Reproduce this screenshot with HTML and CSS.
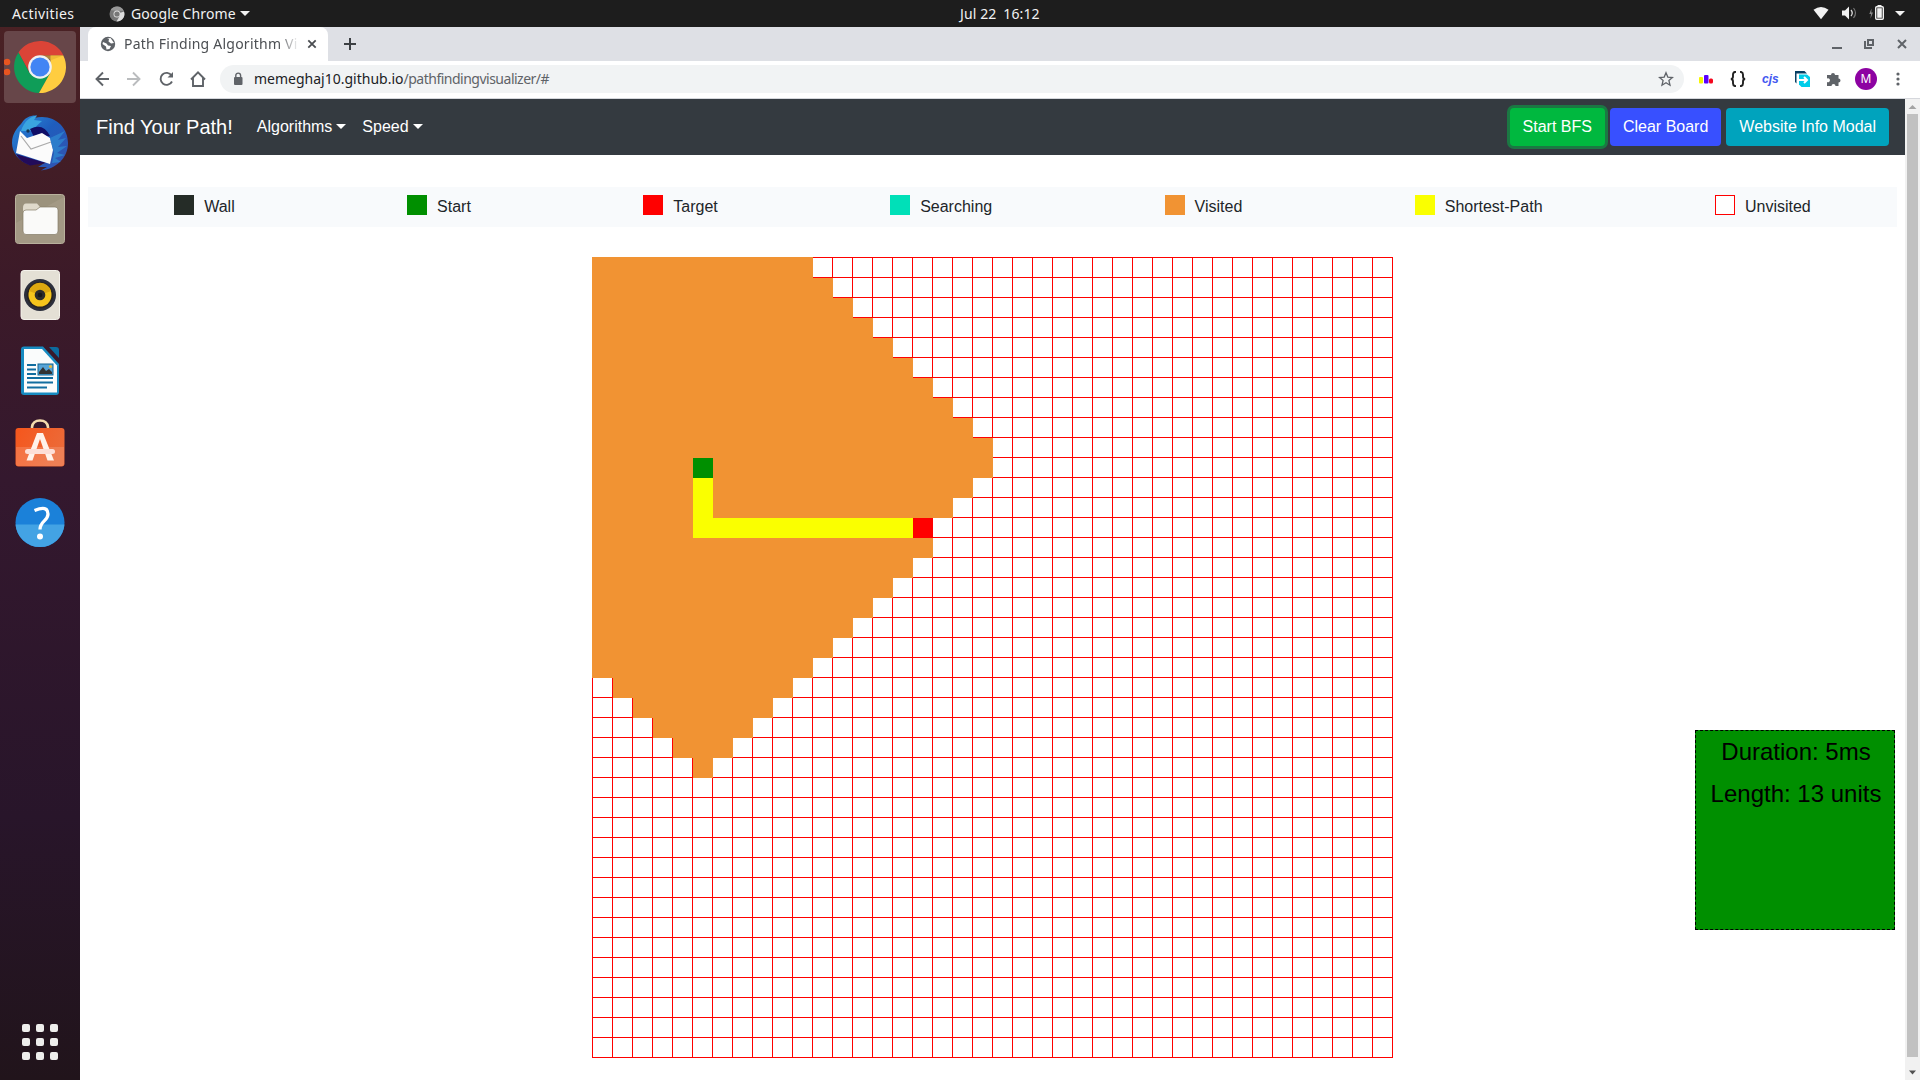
FILE: index.html
```html
<!DOCTYPE html>
<html lang="en">
<head>
<meta charset="utf-8">
<title>Path Finding Algorithm Visualizer</title>
<link rel="stylesheet" href="styles.css">
</head>
<body>
<header class="topbar">
  <div class="topbar-left">
    <span class="t-act">Activities</span>
    <svg class="t-chrome" width="16" height="16" viewBox="0 0 16 16"><circle cx="8" cy="8" r="7.500" fill="#777"/><path d="M8 8L15 5.500A7.500 7.500 0 0 1 7.500 15.500L11 9.500Z" fill="#ddd"/><path d="M1.500 4.200A7.500 7.500 0 0 1 14.800 4.800H8Z" fill="#999"/><circle cx="8" cy="8" r="3.500" fill="#ddd"/><circle cx="8" cy="8" r="2.600" fill="#777"/></svg>
    <span class="t-app">Google Chrome</span>
    <i class="caret"></i>
  </div>
  <div class="t-date"><span>Jul 22</span><span>16:12</span></div>
  <svg class="t-status" width="100" height="27" viewBox="0 0 100 27"><path d="M3.500 9.800Q11 4.400 18.500 9.800L11 19.200Z" fill="#f2f2f2"/><path d="M32 10.500H35L39 6.500V19.500L35 15.500H32Z" fill="#f2f2f2"/><path d="M41 10Q43.500 13 41 16" fill="none" stroke="#ddd" stroke-width="1.300"/><path d="M43.500 8Q47.500 13 43.500 18" fill="none" stroke="#777" stroke-width="1.200"/><path d="M61.500 8.500L59.300 14H61L60.500 18.500L63 12.500H61.300Z" fill="#888"/><rect x="65.700" y="6.700" width="7.600" height="12.600" rx="1" fill="none" stroke="#f2f2f2" stroke-width="1.400"/><rect x="67.200" y="8.200" width="4.600" height="9.600" fill="#f2f2f2"/><rect x="67.500" y="5" width="4" height="1.500" fill="#f2f2f2"/><path d="M85 11H95L90 16Z" fill="#f2f2f2"/></svg>
</header>
<div class="desktop">
  <nav class="dock">
    <div class="slot active"><svg width="72" height="72" viewBox="0 0 72 72"><circle cx="3" cy="31" r="3.300" fill="#e95420"/><circle cx="3" cy="41" r="3.300" fill="#e95420"/><path d="M14.500 21.500A26 26 0 0 1 59.500 24.500H36L25.800 42Z" fill="#db4437"/><path d="M14.500 21.500A26 26 0 0 0 35 62L46.500 42H25.500Z" fill="#0f9d58"/><path d="M59.300 24.500A26 26 0 0 1 35 62L46.200 42L46.500 24.500H36Z" fill="#ffcd40"/><path d="M36 24.500H59.300L47.500 29Z" fill="#e3b02e" opacity=".6"/><circle cx="36" cy="36" r="11.800" fill="#f1f1f1"/><circle cx="36" cy="36" r="9.600" fill="#4285f4"/></svg></div>
    <div class="slot"><svg width="72" height="72" viewBox="0 0 72 72"><defs><linearGradient id="tb" x1="0" y1="0" x2="1" y2="1"><stop offset="0" stop-color="#2b8edb"/><stop offset=".45" stop-color="#1f5dbd"/><stop offset="1" stop-color="#3552ae"/></linearGradient></defs><path d="M8 36C8 26 14 20 17 17C21 10 27 8 33 8.500L30 11C49 6 64 19 64 36C64 51 52 62 37 63.500L43 60L34 60L42 55L26 58C14 54 8 45 8 36Z" fill="url(#tb)"/><path d="M12 47L42 56L26 58.500Q16 55 12 47Z" fill="#220b5a"/><path d="M17 24C20 14 27 9 33 8.500L30 13L38 14L27 24Z" fill="#3aa5df"/><path d="M26 22Q39 15 46 29L30 30Z" fill="#100e67"/><path d="M16 24L23 31L38 26L46 31L49 43L46 57L12 46L14 35Z" fill="#fbfbfb"/><path d="M17 29L27 42L47 35" fill="none" stroke="#aaa" stroke-width="1.200"/><path d="M46 31L61 24L54 33L62 31L54 40L63 39L53 46L61 48L51 51L57 55L48 56L50 46Z" fill="#2e86cf" opacity=".8"/><circle cx="24" cy="24" r="1.700" fill="#163553"/></svg></div>
    <div class="slot"><svg width="72" height="72" viewBox="0 0 72 72"><rect x="11.500" y="11.500" width="49" height="49" rx="3" fill="#9b927d" stroke="#b9b19d"/><path d="M12 60V40L60 14V60Z" fill="#a89f8b" opacity=".6"/><path d="M19 25Q19 20.500 22 20.500H33L36 24H50Q53 24 53 27V35H19Z" fill="#e0dacb"/><path d="M19 30Q19 27 22 27H32L36 24H51Q54 24 54 27V48Q54 51.500 51 51.500H22Q19 51.500 19 48Z" fill="#fafaf9" stroke="#847b67" stroke-width=".7"/></svg></div>
    <div class="slot"><svg width="72" height="72" viewBox="0 0 72 72"><rect x="17" y="11.500" width="38.500" height="49" rx="3" fill="#e4e0d5" stroke="#f5f3ec"/><circle cx="36" cy="36" r="16" fill="#2c2f3c"/><circle cx="36" cy="36" r="13.200" fill="#292522"/><circle cx="36" cy="36" r="11.500" fill="#f5c51c"/><path d="M36 36L25 32A11.500 11.500 0 0 1 47 32Z" fill="#dda810"/><circle cx="36" cy="36" r="5.300" fill="#2b2b2c"/><circle cx="36" cy="36" r="2.300" fill="#171819"/></svg></div>
    <div class="slot"><svg width="72" height="72" viewBox="0 0 72 72"><path d="M20 11.500H39L55 29V57Q55 60 52 60H20Q17 60 17 57V14.500Q17 11.500 20 11.500Z" fill="#168bc1"/><path d="M45 12H52Q55 12 55 15V23Z" fill="#0c6b9e"/><path d="M20 14H38L53 30.500V57.500H20Z" fill="#fafcfc"/><path d="M23 30H32M23 34.500H32M23 39H32M23 43H49M23 47.500H49M23 52.500H43" stroke="#116d9f" stroke-width="2"/><rect x="34" y="29" width="15" height="11" fill="#56a4d7" stroke="#136491"/><path d="M35 39V37L39 32L42 36L45 34L48 37V39Z" fill="#323332"/><circle cx="46.500" cy="31.500" r="1.600" fill="#e4b93c"/></svg></div>
    <div class="slot"><svg width="72" height="72" viewBox="0 0 72 72"><defs><linearGradient id="bag" x1="0" y1="0" x2="1" y2=".4"><stop offset="0" stop-color="#f5561c"/><stop offset="1" stop-color="#ec6a38"/></linearGradient></defs><path d="M28 18V16Q29 9.500 36 9.500Q43 9.500 44 16V18" fill="none" stroke="#f4dcae" stroke-width="2.600"/><rect x="11.500" y="17" width="49" height="38.500" rx="3" fill="url(#bag)"/><path d="M12 36H60V53Q60 55 57.500 55H14Q12 55 12 53Z" fill="#fff" opacity=".15"/><path d="M33 22H39L50 49.500H43.500L36 28L28.500 49.500H22.500Z" fill="#fff2ea"/><rect x="21" y="38" width="30" height="5" rx="2.500" fill="#fddfd7"/></svg></div>
    <div class="slot"><svg width="72" height="72" viewBox="0 0 72 72"><circle cx="36" cy="35.600" r="24.500" fill="#1b81d9"/><path d="M11.500 37.500H60.500A24.500 24.500 0 0 1 36 60.100A24.500 24.500 0 0 1 11.500 37.500Z" fill="#43a3e4"/><path d="M30.500 23.500Q44 18 44 27C44 34 36 34 36 42.500" fill="none" stroke="#fff" stroke-width="3.300"/><circle cx="36" cy="49.500" r="3" fill="#fff"/></svg></div>
    <div class="apps"><i></i><i></i><i></i><i></i><i></i><i></i><i></i><i></i><i></i></div>
  </nav>
  <div class="browser">
    <div class="tabs">
      <div class="tab">
        <svg width="16" height="16" viewBox="0 0 16 16"><circle cx="8" cy="8" r="7.200" fill="#5f6368"/><path d="M3 6L6.500 7.500L8 9.500L11 10L9.500 13L6.500 13.500L6 10.500L2.500 8Z" fill="#fff"/><path d="M7 2.500L9 3L8.500 5.500L11 7.500L14 7L12 4L10.500 2Z" fill="#fff"/></svg>
        <span class="tab-title">Path Finding Algorithm Vi</span>
        <svg class="tab-x" width="10" height="10" viewBox="0 0 10 10"><path d="M1.300 1.300L8.700 8.700M8.700 1.300L1.300 8.700" stroke="#4a4d51" stroke-width="1.800"/></svg>
      </div>
      <svg class="plus" width="14" height="14" viewBox="0 0 14 14"><path d="M7 1V13M1 7H13" stroke="#3c4043" stroke-width="2"/></svg>
      <svg class="winctl" width="80" height="16" viewBox="0 0 80 16"><path d="M1 12H11" stroke="#5f6368" stroke-width="2"/><rect x="37" y="4" width="5" height="5" fill="none" stroke="#5f6368" stroke-width="2"/><path d="M34 5V12H41" fill="none" stroke="#5f6368" stroke-width="2"/><path d="M67 4L75 12M75 4L67 12" stroke="#5f6368" stroke-width="2"/></svg>
    </div>
    <div class="toolbar">
      <svg class="navicons" width="130" height="28" viewBox="0 0 130 28"><g fill="none" stroke-width="1.900"><path d="M19 14H6.500M13 7.500L6.500 14L13 20.500" stroke="#5f6368"/><path d="M37 14H49.500M43 7.500L49.500 14L43 20.500" stroke="#babcbe"/><path d="M81.600 10.500A6 6 0 1 0 82 16.500" stroke="#5f6368"/><path d="M83 7V12.500H77.500Z" fill="#5f6368" stroke="none"/><path d="M101 14.500L108 7.300L115 14.500M103 13V21H113V13" stroke="#5f6368"/></g></svg>
      <div class="omnibox">
        <svg width="10" height="14" viewBox="0 0 10 14"><rect x="1" y="5" width="8.500" height="8" rx="1" fill="#5f6368"/><path d="M2.800 5V3.500A2.300 2.300 0 0 1 7.600 3.500V5" fill="none" stroke="#5f6368" stroke-width="1.400"/></svg>
        <span class="host">memeghaj10.github.io</span><span class="path">/pathfindingvisualizer/#</span>
        <svg class="star" width="16" height="16" viewBox="0 0 16 16"><path d="M8 1.800L9.800 6.100L14.400 6.500L10.900 9.500L12 14.200L8 11.700L4 14.200L5.100 9.500L1.600 6.500L6.200 6.100Z" fill="none" stroke="#5f6368" stroke-width="1.300"/></svg>
      </div>
      <div class="exts">
        <svg width="16" height="16" viewBox="0 0 16 16"><rect x="1" y="6" width="4" height="6.500" rx="1" fill="#f6f600"/><rect x="6" y="4" width="4.500" height="8.500" rx="1" fill="#5a00ff"/><rect x="11" y="7.500" width="4" height="5" rx="1.500" fill="#f4061d"/></svg>
        <svg width="16" height="16" viewBox="0 0 16 16"><path d="M6 .8Q3 .8 3 3.500V5.500Q3 8 .8 8Q3 8 3 10.500V12.500Q3 15.200 6 15.200M10 .8Q13 .8 13 3.500V5.500Q13 8 15.200 8Q13 8 13 10.500V12.500Q13 15.200 10 15.200" fill="none" stroke="#222" stroke-width="1.900"/></svg>
        <span class="cjs">cjs</span>
        <svg width="16" height="16" viewBox="0 0 16 16"><path d="M1 0H10.500L13 2.500H2.500V12.500L1 11Z" fill="#073e63"/><path d="M5 3.500H13L16 6V16H7.500L5 13.500Z" fill="#00cdea"/><path d="M5 9H13M10 6L13 9L10 12" fill="none" stroke="#fff" stroke-width="2"/></svg>
        <svg width="16" height="16" viewBox="0 0 16 16"><path d="M1 4H5A2 2 0 1 1 9 4H12.500V7.500A2 2 0 1 1 12.500 11.500V15H9.500A1.900 1.900 0 1 0 5.500 15H1V11A2 2 0 1 0 1 7.500Z" fill="#5f6368"/></svg>
        <span class="avatar">M</span>
        <svg class="dots" width="4" height="14" viewBox="0 0 4 14"><circle cx="2" cy="2" r="1.600" fill="#5f6368"/><circle cx="2" cy="7" r="1.600" fill="#5f6368"/><circle cx="2" cy="12" r="1.600" fill="#5f6368"/></svg>
      </div>
    </div>
    <div class="viewport">
      <div class="page">
        <nav class="navbar">
          <span class="brand">Find Your Path!</span>
          <span class="navlink">Algorithms<i class="caret sm"></i></span>
          <span class="navlink">Speed<i class="caret sm"></i></span>
          <div class="buttons">
            <button class="btn green">Start BFS</button>
            <button class="btn blue">Clear Board</button>
            <button class="btn teal">Website Info Modal</button>
          </div>
        </nav>
        <ul class="legend">
          <li><i class="wall"></i>Wall</li>
          <li><i class="start"></i>Start</li>
          <li><i class="target"></i>Target</li>
          <li><i class="searching"></i>Searching</li>
          <li><i class="visited"></i>Visited</li>
          <li><i class="path-cell"></i>Shortest-Path</li>
          <li><i class="unvisited"></i>Unvisited</li>
        </ul>
        <div class="board" id="board"></div>
      </div>
      <div class="scrollbar">
        <svg width="15" height="15" viewBox="0 0 15 15"><path d="M3.500 10L7.500 6L11.500 10Z" fill="#a3a3a3"/></svg>
        <div class="thumb"></div>
        <svg width="15" height="15" viewBox="0 0 15 15"><path d="M4 5.500H11L7.500 9.500Z" fill="#505050"/></svg>
      </div>
    </div>
  </div>
</div>
<div class="result"><p>Duration: 5ms</p><p>Length: 13 units</p></div>
<script src="board.js"></script>
</body>
</html>
```
FILE: styles.css
```css
* { box-sizing: border-box; }
body { margin: 0; width: 1920px; height: 1080px; overflow: hidden; display: flex; flex-direction: column; background: #fff; font-family: "Liberation Sans", Arial, sans-serif; font-size: 16px; line-height: 24px; color: #212529; }
svg { display: block; flex: none; }
.topbar { height: 27px; flex: none; background: #1d1d1d; color: #f2f2f2; display: grid; grid-template-columns: 1fr auto 1fr; align-items: center; font: 14px/25px "Noto Sans", sans-serif; }
.topbar-left { display: flex; align-items: center; padding-left: 12px; }
.t-act { width: 97px; letter-spacing: .4px; }
.t-chrome { margin-right: 6px; }
.t-app { letter-spacing: .1px; width: 104px; white-space: nowrap; }
.topbar-left .caret { margin-left: 5px; }
.caret { display: inline-block; border: 5px solid transparent; border-top-color: currentColor; border-bottom: 0; }
.t-date { display: flex; gap: 7px; padding-left: 82px; width: 164px; letter-spacing: .1px; white-space: nowrap; }
.t-status { justify-self: end; margin-right: 10px; }
.desktop { flex: 1; display: flex; min-height: 0; }
.dock { width: 80px; flex: none; padding: 4px 4px 20px; display: flex; flex-direction: column; gap: 4px; background: linear-gradient(#4a2124, #3c1a28 24%, #34182e 43%, #28152a 75%, #21141b); }
.slot { height: 72px; border-radius: 4px; }
.slot.active { background: #674649; }
.apps { margin: auto auto 0; display: grid; grid-template-columns: repeat(3, 8px); gap: 6px; }
.apps i { height: 8px; border-radius: 2px; background: #eeeeec; }
.browser { flex: 1; display: flex; flex-direction: column; min-width: 0; }
.tabs { height: 34px; flex: none; background: #dee0e5; display: flex; align-items: center; padding-left: 8px; font-family: "Noto Sans", sans-serif; }
.tab { height: 34px; width: 240px; padding-left: 12px; background: #fff; border-radius: 8px 8px 0 0; display: flex; align-items: center; }
.tab-title { margin-left: 8px; width: 175px; overflow: hidden; white-space: nowrap; font-size: 14px; letter-spacing: .23px; color: #4c4f53; -webkit-mask-image: linear-gradient(90deg, #000 155px, transparent 175px); mask-image: linear-gradient(90deg, #000 155px, transparent 175px); }
.tab-x { margin-left: 8px; }
.plus { margin-left: 15px; }
.winctl { margin-left: auto; margin-right: 9px; }
.toolbar { height: 38px; flex: none; border-bottom: 1px solid #d5d7dc; padding: 4px 0 5px 10px; display: flex; align-items: center; background: #fff; }
.omnibox { width: 1464px; height: 28px; border-radius: 14px; background: #f1f3f4; display: flex; align-items: center; padding: 0 10px 0 13px; font: 14px/28px "Noto Sans", sans-serif; white-space: nowrap; }
.host { margin-left: 11px; color: #202124; }
.path { color: #5f6368; letter-spacing: -.5px; }
.star { margin-left: auto; }
.exts { display: flex; align-items: center; margin-left: 14px; gap: 16px; }
.cjs { font: italic bold 12px/16px "Liberation Sans", sans-serif; color: #4358f0; width: 16px; }
.avatar { width: 22px; height: 22px; margin: 0 -3px; border-radius: 50%; background: #8d02a2; color: #fff; text-align: center; font: 12px/22px "Noto Sans", sans-serif; }
.dots { margin-left: 6px; }
.viewport { flex: 1; display: flex; min-height: 0; }
.page { flex: 1; }
.navbar { height: 56px; background: #343a40; color: #fff; padding: 0 16px; display: flex; align-items: center; }
.brand { font-size: 20px; line-height: 30px; margin-right: 24px; }
.navlink { margin-right: 16px; display: flex; align-items: center; }
.caret.sm { margin-left: 4px; margin-bottom: 1px; }
.buttons { margin-left: auto; display: flex; gap: 5px; }
.btn { height: 38px; border: 0; border-radius: 4px; padding: 0 13px; color: #fff; font: 16px/38px "Liberation Sans", sans-serif; white-space: nowrap; }
.green { background: #00b83f; box-shadow: 0 0 0 3px #1b7843; }
.blue { background: #3850ff; }
.teal { background: #00a3bd; }
.legend { list-style: none; margin: 32px 8px 30px; padding: 0; height: 40px; background: #f8fafc; display: flex; justify-content: space-around; align-items: center; }
.legend li { display: flex; align-items: center; }
.legend i { width: 20px; height: 20px; margin: 0 10px 4px 0; }
.wall { background: #252c27; }
.start { background: #008f00; }
.target { background: #f00; }
.searching { background: #00e0b8; }
.visited { background: #f19333; }
.path-cell { background: #faff00; }
.unvisited { border: 1px solid #f00; background: #fff; }
.board { width: 801px; margin: 0 auto; display: grid; grid-template-columns: 21px repeat(39, 20px); grid-template-rows: 21px repeat(39, 20px); }
.cell.empty { border-right: 1px solid #f00; border-bottom: 1px solid #f00; }
.cell.empty.first-row { border-top: 1px solid #f00; }
.cell.empty.first-col { border-left: 1px solid #f00; }
.scrollbar { width: 15px; background: #f1f1f1; display: flex; flex-direction: column; }
.thumb { height: 943px; margin: 0 2px; background: #c1c1c1; }
.scrollbar svg:last-child { margin-top: auto; }
.result { position: absolute; left: 1695px; top: 730px; width: 200px; height: 200px; background: #008f00; border: 1px dashed #000; color: #000; text-align: center; font-size: 24px; padding: 6px 0 0 2px; white-space: nowrap; }
.result p { margin: 0 0 13px; line-height: 29px; }
```
FILE: board.js
```js
const size = 40;
const start = [10, 5];
const target = [13, 16];
const board = document.getElementById('board');

// First and one-past-last visited column for each row the search reached.
function visitedRange(row) {
  const from = Math.max(0, row - 20);
  if (row <= 9) return [from, row + 11];
  if (row <= 13) return [from, 30 - row];
  if (row <= 25) return [from, 31 - row];
  return [0, 0];
}

function kind(row, col) {
  if (row === start[0] && col === start[1]) return 'start';
  if (row === target[0] && col === target[1]) return 'target';
  if (row > start[0] && row <= target[0] && col === start[1]) return 'path-cell';
  if (row === target[0] && col > start[1] && col < target[1]) return 'path-cell';
  const [from, to] = visitedRange(row);
  return col >= from && col < to ? 'visited' : 'empty';
}

for (let row = 0; row < size; row++) {
  for (let col = 0; col < size; col++) {
    const cell = document.createElement('div');
    cell.className = 'cell ' + kind(row, col);
    if (row === 0) cell.classList.add('first-row');
    if (col === 0) cell.classList.add('first-col');
    board.appendChild(cell);
  }
}
```
